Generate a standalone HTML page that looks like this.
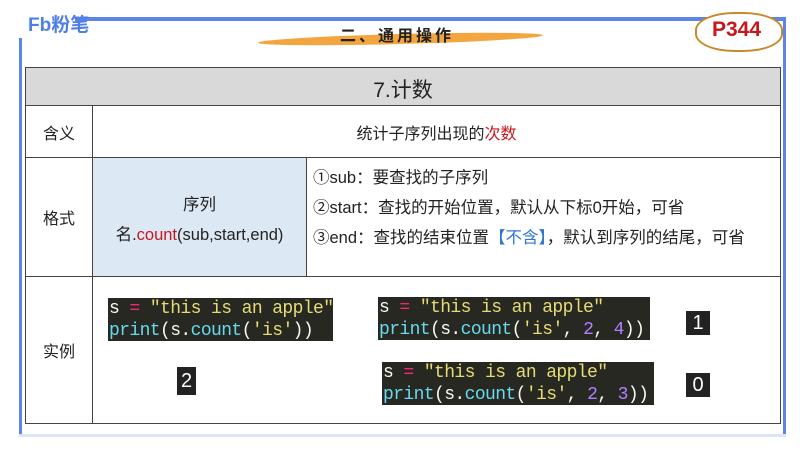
<!DOCTYPE html>
<html><head><meta charset="utf-8"><style>
*{margin:0;padding:0;box-sizing:border-box}
body{width:800px;height:450px;background:#fff;position:relative;overflow:hidden;font-family:"Liberation Sans","Noto Sans CJK SC",sans-serif;color:#222}
.a{position:absolute}
.code{position:absolute;background:#272822;font-family:"Liberation Mono","DejaVu Sans Mono",monospace;font-size:18px;line-height:22px;padding:0 1px;color:#f8f8f2;white-space:pre;letter-spacing:-0.6px}
.k{color:#f92672}.s{color:#e6db74}.f{color:#66d9ef}.n{color:#ae81ff}
.num{position:absolute;background:#222;color:#fff;font-size:20px;text-align:center;line-height:24px}
.cell{position:absolute;border:1px solid #444;display:flex;align-items:center;justify-content:center;font-size:16px}
</style></head><body>
<div class="a" style="left:75px;top:17px;width:710px;height:4px;background:#5b86e5"></div>
<div class="a" style="left:19px;top:38px;width:3px;height:398px;background:#5b86e5"></div>
<div class="a" style="left:783px;top:17px;width:3px;height:420px;background:#5b86e5"></div>
<div class="a" style="left:19px;top:434px;width:767px;height:3px;background:#dbe6fb"></div>
<div class="a" style="left:28px;top:10px;font-size:19px;font-weight:bold;color:#4d7fe6">Fb粉笔</div>
<div class="a" style="left:258px;top:34px;width:285px;height:10px;background:#f3a640;border-radius:50%;transform:rotate(-1.5deg)"></div>
<div class="a" style="left:340px;top:22px;font-size:16px;font-weight:bold;letter-spacing:3px">二、通用操作</div>
<div class="a" style="left:695px;top:12px;width:88px;height:40px;background:#fff;border:2px solid #c88a2a;border-radius:45%"></div>
<div class="a" style="left:712px;top:18px;font-size:21px;color:#c8161d;font-weight:bold">P344</div>

<div class="cell" style="left:25px;top:67px;width:756px;height:39px;background:#d9d9d9;font-size:21px;padding-top:4px">7.计数</div>
<div class="cell" style="left:25px;top:105px;width:68px;height:53px">含义</div>
<div class="cell" style="left:92px;top:105px;width:689px;height:53px">统计子序列出现的<span style="color:#c8161d">次数</span></div>
<div class="cell" style="left:25px;top:157px;width:68px;height:120px">格式</div>
<div class="cell" style="left:92px;top:157px;width:215px;height:120px;background:#dde8f5;display:block;text-align:center;line-height:30px;padding-top:32px;font-size:16.5px">序列<br><span>名.<span style="color:#c8161d">count</span>(sub,start,end)</span></div>
<div class="cell" style="left:306px;top:157px;width:475px;height:120px;display:block;padding:5px 0 0 6px;line-height:30px;font-size:16.5px">①sub：要查找的子序列<br>②start：查找的开始位置，默认从下标0开始，可省<br>③end：查找的结束位置<span style="color:#2e75d6">【不含】</span>，默认到序列的结尾，可省</div>
<div class="cell" style="left:25px;top:276px;width:68px;height:148px">实例</div>
<div class="cell" style="left:92px;top:276px;width:689px;height:148px"></div>

<div class="code" style="left:108px;top:298px;width:225px;height:43px">s <span class="k">=</span> <span class="s">"this is an apple"</span>
<span class="f">print</span>(s.<span class="f">count</span>(<span class="s">'is'</span>))</div>
<div class="code" style="left:378px;top:297px;width:272px;height:43px">s <span class="k">=</span> <span class="s">"this is an apple"</span>
<span class="f">print</span>(s.<span class="f">count</span>(<span class="s">'is'</span>, <span class="n">2</span>, <span class="n">4</span>))</div>
<div class="code" style="left:382px;top:362px;width:272px;height:43px">s <span class="k">=</span> <span class="s">"this is an apple"</span>
<span class="f">print</span>(s.<span class="f">count</span>(<span class="s">'is'</span>, <span class="n">2</span>, <span class="n">3</span>))</div>
<div class="num" style="left:686px;top:311px;width:24px;height:24px">1</div>
<div class="num" style="left:686px;top:373px;width:24px;height:24px">0</div>
<div class="num" style="left:177px;top:367px;width:19px;height:28px;line-height:28px">2</div>
</body></html>
